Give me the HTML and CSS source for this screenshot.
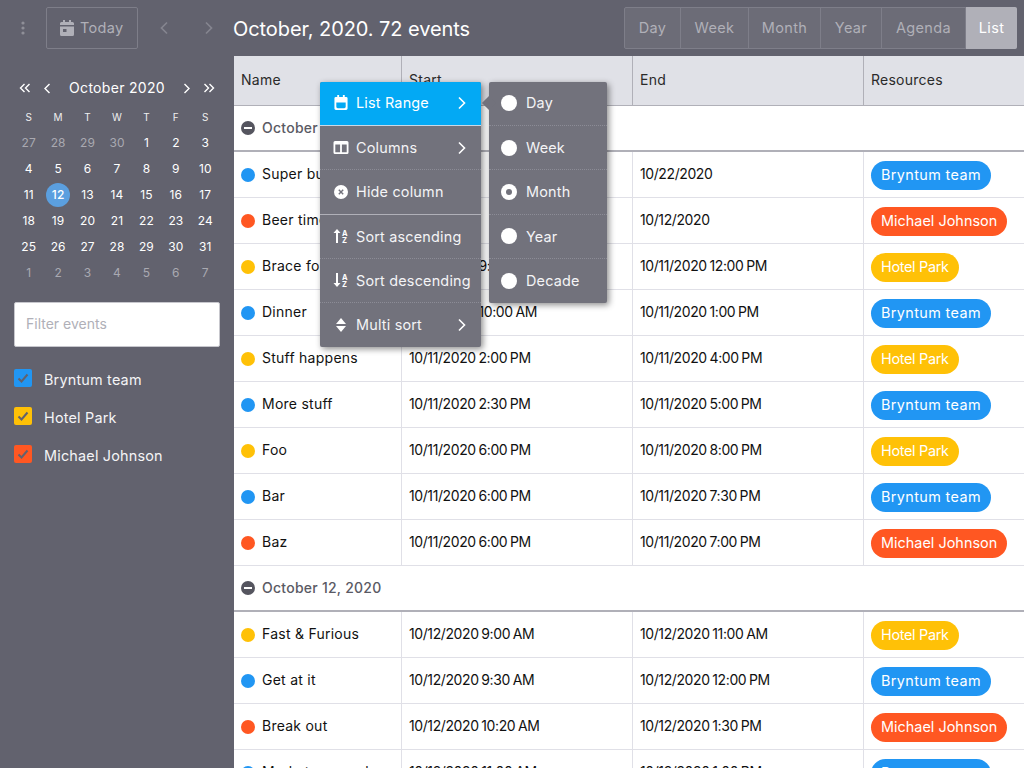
FILE: index.html
```html
<!DOCTYPE html>
<html lang="en">
<head>
<meta charset="utf-8">
<title>Calendar list view</title>
<link rel="stylesheet" href="styles.css">
</head>
<body>
<div class="app">
  <header class="toolbar">
    <span class="dots"><svg width="4" height="14" viewBox="0 0 4 14"><circle cx="2" cy="2" r="1.6"/><circle cx="2" cy="7" r="1.6"/><circle cx="2" cy="12" r="1.6"/></svg></span>
    <button class="today"><svg class="cal" width="14" height="16" viewBox="0 0 14 16"><path d="M3 0h2v2h4V0h2v2h1.500A1.500 1.500 0 0 1 14 3.500V5H0V3.500A1.500 1.500 0 0 1 1.500 2H3zM0 6.500h14v8a1.500 1.500 0 0 1-1.500 1.500h-11A1.500 1.500 0 0 1 0 14.500zM3 9v3h3.500V9z"/></svg>Today</button>
    <span class="nav"><svg width="10" height="14" viewBox="0 0 10 14"><path d="M8 1.500 2.500 7 8 12.500"/></svg></span>
    <span class="nav"><svg width="10" height="14" viewBox="0 0 10 14"><path d="M2 1.500 7.500 7 2 12.500"/></svg></span>
    <h1 class="title">October, 2020. 72 events</h1>
    <div class="modes">
      <span class="mode">Day</span><span class="mode">Week</span><span class="mode">Month</span><span class="mode">Year</span><span class="mode">Agenda</span><span class="mode active">List</span>
    </div>
  </header>
  <div class="main">
    <aside class="side">
      <div class="cal-head">
        <svg class="dbl" width="12" height="10" viewBox="0 0 12 10"><path d="M5.500 1 1.500 5l4 4M10.500 1l-4 4 4 4"/></svg>
        <svg class="sgl" width="8" height="11" viewBox="0 0 8 11"><path d="M6.500 1 2 5.500l4.500 4.500"/></svg>
        <span class="month">October 2020</span>
        <svg class="sgl" width="8" height="11" viewBox="0 0 8 11"><path d="M1.500 1 6 5.500 1.500 10"/></svg>
        <svg class="dbl" width="12" height="10" viewBox="0 0 12 10"><path d="M1.500 1l4 4-4 4M6.500 1l4 4-4 4"/></svg>
      </div>
      <div class="days">
        <span class="wd">S</span><span class="wd">M</span><span class="wd">T</span><span class="wd">W</span><span class="wd">T</span><span class="wd">F</span><span class="wd">S</span>
        <span class="off">27</span><span class="off">28</span><span class="off">29</span><span class="off">30</span><span>1</span><span>2</span><span>3</span>
        <span>4</span><span>5</span><span>6</span><span>7</span><span>8</span><span>9</span><span>10</span>
        <span>11</span><span class="sel"><b>12</b></span><span>13</span><span>14</span><span>15</span><span>16</span><span>17</span>
        <span>18</span><span>19</span><span>20</span><span>21</span><span>22</span><span>23</span><span>24</span>
        <span>25</span><span>26</span><span>27</span><span>28</span><span>29</span><span>30</span><span>31</span>
        <span class="off">1</span><span class="off">2</span><span class="off">3</span><span class="off">4</span><span class="off">5</span><span class="off">6</span><span class="off">7</span>
      </div>
      <input class="filter" type="text" placeholder="Filter events">
      <ul class="res">
        <li><span class="box blue"><svg width="12" height="10" viewBox="0 0 12 10"><path d="M1.500 5.500 4.500 8.500 10.500 1.500"/></svg></span><span class="lbl">Bryntum team</span></li>
        <li><span class="box yellow"><svg width="12" height="10" viewBox="0 0 12 10"><path d="M1.500 5.500 4.500 8.500 10.500 1.500"/></svg></span><span class="lbl">Hotel Park</span></li>
        <li><span class="box orange"><svg width="12" height="10" viewBox="0 0 12 10"><path d="M1.500 5.500 4.500 8.500 10.500 1.500"/></svg></span><span class="lbl">Michael Johnson</span></li>
      </ul>
    </aside>
    <section class="grid">
      <div class="row head"><div>Name</div><div>Start</div><div>End</div><div>Resources</div></div>
      <div class="group"><span class="minus"></span>October 11, 2020</div>
      <div class="row"><div><i class="dot blue"></i>Super bug</div><div>10/11/2020</div><div>10/22/2020</div><div><span class="chip blue">Bryntum team</span></div></div>
      <div class="row"><div><i class="dot orange"></i>Beer time</div><div>10/11/2020</div><div>10/12/2020</div><div><span class="chip orange">Michael Johnson</span></div></div>
      <div class="row"><div><i class="dot yellow"></i>Brace for it</div><div>10/11/2020 9:00 AM</div><div>10/11/2020 12:00 PM</div><div><span class="chip yellow">Hotel Park</span></div></div>
      <div class="row"><div><i class="dot blue"></i>Dinner</div><div>10/11/2020 10:00 AM</div><div>10/11/2020 1:00 PM</div><div><span class="chip blue">Bryntum team</span></div></div>
      <div class="row"><div><i class="dot yellow"></i>Stuff happens</div><div>10/11/2020 2:00 PM</div><div>10/11/2020 4:00 PM</div><div><span class="chip yellow">Hotel Park</span></div></div>
      <div class="row"><div><i class="dot blue"></i>More stuff</div><div>10/11/2020 2:30 PM</div><div>10/11/2020 5:00 PM</div><div><span class="chip blue">Bryntum team</span></div></div>
      <div class="row"><div><i class="dot yellow"></i>Foo</div><div>10/11/2020 6:00 PM</div><div>10/11/2020 8:00 PM</div><div><span class="chip yellow">Hotel Park</span></div></div>
      <div class="row"><div><i class="dot blue"></i>Bar</div><div>10/11/2020 6:00 PM</div><div>10/11/2020 7:30 PM</div><div><span class="chip blue">Bryntum team</span></div></div>
      <div class="row"><div><i class="dot orange"></i>Baz</div><div>10/11/2020 6:00 PM</div><div>10/11/2020 7:00 PM</div><div><span class="chip orange">Michael Johnson</span></div></div>
      <div class="group"><span class="minus"></span>October 12, 2020</div>
      <div class="row"><div><i class="dot yellow"></i>Fast &amp; Furious</div><div>10/12/2020 9:00 AM</div><div>10/12/2020 11:00 AM</div><div><span class="chip yellow">Hotel Park</span></div></div>
      <div class="row"><div><i class="dot blue"></i>Get at it</div><div>10/12/2020 9:30 AM</div><div>10/12/2020 12:00 PM</div><div><span class="chip blue">Bryntum team</span></div></div>
      <div class="row"><div><i class="dot orange"></i>Break out</div><div>10/12/2020 10:20 AM</div><div>10/12/2020 1:30 PM</div><div><span class="chip orange">Michael Johnson</span></div></div>
      <div class="row"><div><i class="dot blue"></i>Market research</div><div>10/12/2020 11:00 AM</div><div>10/12/2020 1:00 PM</div><div><span class="chip blue">Bryntum team</span></div></div>
    </section>
  </div>
</div>
<nav class="menu">
  <div class="item hot"><svg class="ico" width="14" height="15" viewBox="0 0 14 16"><path d="M3 0h2v2h4V0h2v2h1.500A1.500 1.500 0 0 1 14 3.500V14.500A1.500 1.500 0 0 1 12.500 16h-11A1.500 1.500 0 0 1 0 14.500V3.500A1.500 1.500 0 0 1 1.500 2H3zM2 8v4.500A1.500 1.500 0 0 0 3.500 14h7a1.500 1.500 0 0 0 1.500-1.500V8z" fill-rule="evenodd"/></svg><span>List Range</span><svg class="chev" width="9" height="14" viewBox="0 0 9 14"><path d="M2 1.500 7.500 7 2 12.500"/></svg></div>
  <div class="item"><svg class="ico" width="15" height="13" viewBox="0 0 15 13"><path d="M1.500 0h12A1.500 1.500 0 0 1 15 1.500v10a1.500 1.500 0 0 1-1.500 1.500h-12A1.500 1.500 0 0 1 0 11.500v-10A1.500 1.500 0 0 1 1.500 0zM1.800 3.500v7.700h4.800V3.500zM8.400 3.500v7.700h4.800V3.500z" fill-rule="evenodd"/></svg><span>Columns</span><svg class="chev" width="9" height="14" viewBox="0 0 9 14"><path d="M2 1.500 7.500 7 2 12.500"/></svg></div>
  <div class="item rule"><svg class="ico" width="14" height="14" viewBox="0 0 14 14"><path d="M7 0a7 7 0 1 1 0 14A7 7 0 0 1 7 0zM5.300 4.300l-1 1L6 7 4.300 8.700l1 1L7 8l1.700 1.700 1-1L8 7l1.700-1.700-1-1L7 6z" fill-rule="evenodd"/></svg><span>Hide column</span></div>
  <div class="item"><svg class="ico" width="15" height="14" viewBox="0 0 15 14"><path d="M3.500 0 7 4H4.500v10h-2V4H0z"/><text x="8.500" y="6.500" class="az">A</text><text x="8.500" y="13.800" class="az">Z</text></svg><span>Sort ascending</span></div>
  <div class="item"><svg class="ico" width="15" height="14" viewBox="0 0 15 14"><path d="M3.500 14 0 10h2.500V0h2v10H7z"/><text x="8.500" y="6.500" class="az">A</text><text x="8.500" y="13.800" class="az">Z</text></svg><span>Sort descending</span></div>
  <div class="item last"><svg class="ico" width="14" height="14" viewBox="0 0 14 14"><path d="M7 0l5 6H2zM7 14l5-6H2z"/></svg><span>Multi sort</span><svg class="chev" width="9" height="14" viewBox="0 0 9 14"><path d="M2 1.500 7.500 7 2 12.500"/></svg></div>
</nav>
<nav class="menu sub">
  <div class="item first"><i class="radio"></i><span>Day</span></div>
  <div class="item"><i class="radio"></i><span>Week</span></div>
  <div class="item"><i class="radio on"></i><span>Month</span></div>
  <div class="item"><i class="radio"></i><span>Year</span></div>
  <div class="item last"><i class="radio"></i><span>Decade</span></div>
</nav>
</body>
</html>
```
FILE: styles.css
```css
* { box-sizing: border-box; }
html, body { margin: 0; height: 100%; overflow: hidden; }
body { font: 14px/1.2 Inter, "Liberation Sans", sans-serif; color: #111; letter-spacing: .25px; }
svg { display: block; flex: none; }

.app { height: 100vh; display: flex; flex-direction: column; background: #62626e; }
.toolbar { height: 56px; flex: none; display: flex; align-items: center; padding: 0 7px 1px 15px; }
.dots { width: 16px; margin-right: 15px; display: flex; justify-content: center; }
.dots svg { fill: #8f8f98; }
.today { width: 92px; height: 42px; margin-right: 3px; display: flex; align-items: center; gap: 6px; padding: 0 0 0 13px; background: none; border: 1px solid #7e7e89; border-radius: 2px; color: #b0b0b8; font: inherit; font-size: 14.5px; letter-spacing: .3px; }
.cal { fill: #b0b0b8; }
.nav { width: 45px; display: flex; justify-content: center; }
.nav path { fill: none; stroke: #85858f; stroke-width: 1.7; }
.title { flex: 1; margin: 3px 0 0 2px; font-size: 20px; font-weight: 400; color: #fff; letter-spacing: -.07px; }
.modes { display: grid; grid-template-columns: 56px 68px 72px 61px 84px 50px; height: 42px; border: 1px solid #7e7e89; border-radius: 2px; background: #6c6c77; }
.mode { display: flex; align-items: center; justify-content: center; color: #b0b0b8; border-right: 1px solid #7e7e89; font-size: 14.5px; letter-spacing: .35px; }
.mode.active { background: #b0b0b8; color: #fff; border-right: 0; margin: -1px -1px -1px 0; border-radius: 0 2px 2px 0; }

.main { flex: 1; display: flex; min-height: 0; }
.side { width: 234px; flex: none; padding: 20px 14px 0; color: #fff; }
.cal-head { height: 24px; display: flex; align-items: center; padding: 0 5px 0 5px; }
.cal-head path { fill: none; stroke: #fff; stroke-width: 1.4; }
.month { flex: 1; text-align: center; font-size: 14px; letter-spacing: .3px; }
.sgl { margin: 0 12px 0 12px; }
.days { margin-top: 4px; display: grid; grid-template-columns: repeat(7, 1fr); grid-auto-rows: 26px; font-size: 12px; letter-spacing: .1px; }
.days span { display: flex; align-items: center; justify-content: center; }
.days .wd { font-size: 10px; color: #eee; }
.days .off { color: #a9a9b1; }
.sel b { width: 24px; height: 24px; border-radius: 50%; background: #5b9fdf; font-weight: 500; display: flex; align-items: center; justify-content: center; }
.filter { display: block; width: 206px; height: 45px; margin-top: 16px; padding: 0 11px 2px; border: 1px solid #c7c7cd; border-radius: 2px; background: #fff; font: inherit; font-size: 14px; outline: 0; }
.filter::placeholder { color: #b0b0b8; opacity: 1; }
.res { list-style: none; margin: 12px 0 0; padding: 0; }
.res li { height: 38px; display: flex; align-items: center; gap: 12px; color: #f4f4f6; font-size: 14.4px; letter-spacing: .2px; }
.lbl { margin-top: 4px; }
.box { width: 18px; height: 18px; border-radius: 2px; display: flex; align-items: center; justify-content: center; }
.box path { fill: none; stroke: #62626e; stroke-width: 2; }
.blue { background: #2196f3; }
.yellow { background: #ffc107; }
.orange { background: #ff5722; }

.grid { flex: 1; background: #fff; overflow: hidden; min-width: 0; }
.row { display: grid; grid-template-columns: 168px 231px 231px 1fr; height: 46px; }
.row > div { display: flex; align-items: center; padding: 0 7px; border-right: 1px solid #e0e0e7; border-bottom: 1px solid #e0e0e7; white-space: nowrap; overflow: hidden; }
.row > div:last-child { border-right: 0; }
.row:not(.head) > div:nth-child(2), .row:not(.head) > div:nth-child(3) { letter-spacing: -.4px; word-spacing: -.8px; }
.head { height: 50px; background: #e0e1e7; }
.head > div { border-right-color: #b0b0b8; border-bottom-color: #b0b0b8; color: #2a2a2a; }
.group { height: 46px; display: flex; align-items: center; gap: 7px; padding: 0 7px; border-bottom: 2px solid #b0b0b8; color: #5a5a64; font-weight: 500; }
.minus { width: 14px; height: 14px; border-radius: 50%; background: #55555f; display: flex; align-items: center; justify-content: center; }
.minus::before { content: ""; width: 8px; height: 2px; background: #fff; }
.dot { width: 14px; height: 14px; border-radius: 50%; margin-right: 7px; flex: none; }
.chip { height: 29px; padding: 0 10px; border-radius: 15px; color: #fff; display: flex; align-items: center; font-size: 14.4px; letter-spacing: .38px; margin-top: 1px; }
.chip.orange { letter-spacing: .03px; }
.chip.yellow { letter-spacing: -.3px; }

.menu { position: absolute; left: 320px; top: 82px; width: 161px; background: #72727c; border-radius: 2px; box-shadow: 2px 2px 6px rgba(0, 0, 0, .45); color: #f4f4f6; font-size: 14.4px; letter-spacing: .2px; }
.item { height: 44.2px; display: flex; align-items: center; padding-left: 13px; border-bottom: 1px dotted #8c8c96; }
.item > span { margin-left: 7px; flex: 1; white-space: nowrap; }
.item.hot { background: #03a9f4; color: #fff; border-bottom: 1px solid #c8d8e6; border-radius: 2px 2px 0 0; padding-bottom: 2px; }
.item.first { padding-bottom: 2px; }
.item.rule { border-bottom: 1px solid #b0b0b8; }
.item.last { border-bottom: 0; }
.ico { fill: #fff; width: 16px; }
.az { font: 700 7.500px Inter, sans-serif; fill: #fff; }
.chev { margin-right: 15px; }
.chev path { fill: none; stroke: #fff; stroke-width: 1.6; }
.sub { left: 489px; width: 118px; }
.sub::before { content: ""; position: absolute; left: -5px; top: 16px; width: 10px; height: 10px; background: #72727c; transform: rotate(45deg); }
.sub .item { position: relative; padding-left: 12px; }
.sub .item > span { margin-left: 9px; }
.radio { width: 16px; height: 16px; border-radius: 50%; background: #fff; flex: none; display: flex; align-items: center; justify-content: center; }
.radio.on::before { content: ""; width: 6px; height: 6px; border-radius: 50%; background: #72727c; }
```
